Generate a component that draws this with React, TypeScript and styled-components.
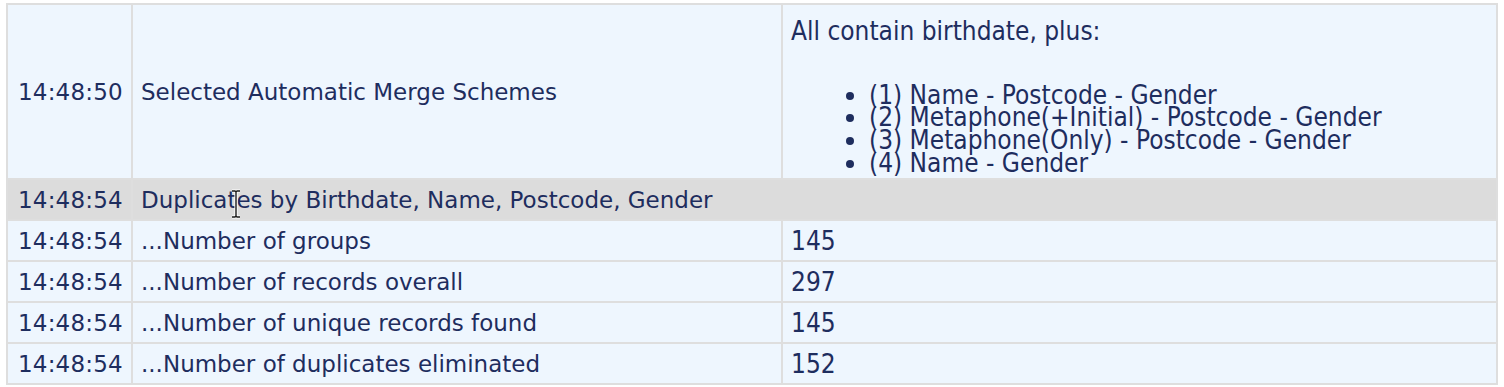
import { Fragment } from "react";
import styled, { createGlobalStyle } from "styled-components";

const GlobalStyle = createGlobalStyle`
  body {
    margin: 0;
    background: #ffffff;
  }
`;

const Page = styled.div`
  padding: 3px 6px 0;
`;

const LogGrid = styled.div`
  display: grid;
  grid-template-columns: 123px 648px 713px;
  grid-template-rows: 173px repeat(5, 39px);
  gap: 2px;
  padding: 2px;
  width: 1492px;
  box-sizing: border-box;
  background: #dedede;
  color: #1e2d5e;
`;

const Cell = styled.div<{ $section?: boolean }>`
  position: relative;
  display: flex;
  align-items: center;
  padding: 0 8px;
  background: ${(p) => (p.$section ? "#dcdcdc" : "#eef6fe")};
  font-family: "DejaVu Sans", Verdana, sans-serif;
  font-size: 23px;
  line-height: 26px;
  white-space: nowrap;
`;

const TimeCell = styled(Cell)`
  padding-left: 10px;
  letter-spacing: 0.2px;
`;

const MessageCell = styled(Cell)<{ $wide?: boolean }>`
  grid-column: ${(p) => (p.$wide ? "span 2" : "auto")};
`;

const ValueCell = styled(Cell)`
  font-family: "DejaVu Sans Condensed", "DejaVu Sans", Tahoma, sans-serif;
  font-stretch: condensed;
  font-size: 26px;
`;

const SchemeCell = styled(ValueCell)`
  flex-direction: column;
  align-items: flex-start;
  padding-top: 15px;
  line-height: 22.7px;
`;

const SchemeList = styled.ul`
  margin: 41px 0 0;
  padding-left: 78px;
  list-style: disc;
`;

const Cursor = styled.svg`
  position: absolute;
  left: 97px;
  top: 9px;
`;

const IBeam = () => (
  <Cursor width="12" height="30" viewBox="0 0 12 30">
    <path
      d="M2 2h3l1 1 1-1h3M6 3v24M2 28h3l1-1 1 1h3"
      fill="none"
      stroke="#ffffff"
      strokeWidth="3.2"
    />
    <path
      d="M2 2h3l1 1 1-1h3M6 3v24M2 28h3l1-1 1 1h3"
      fill="none"
      stroke="#1a1a1a"
      strokeWidth="1.4"
    />
  </Cursor>
);

const schemes = [
  "(1) Name - Postcode - Gender",
  "(2) Metaphone(+Initial) - Postcode - Gender",
  "(3) Metaphone(Only) - Postcode - Gender",
  "(4) Name - Gender",
];

const stats = [
  { label: "...Number of groups", value: "145" },
  { label: "...Number of records overall", value: "297" },
  { label: "...Number of unique records found", value: "145" },
  { label: "...Number of duplicates eliminated", value: "152" },
];

export default function App() {
  return (
    <>
      <GlobalStyle />
      <Page>
        <LogGrid>
          <TimeCell>14:48:50</TimeCell>
          <MessageCell>Selected Automatic Merge Schemes</MessageCell>
          <SchemeCell>
            All contain birthdate, plus:
            <SchemeList>
              {schemes.map((s) => (
                <li key={s}>{s}</li>
              ))}
            </SchemeList>
          </SchemeCell>

          <TimeCell $section>14:48:54</TimeCell>
          <MessageCell $section $wide>
            Duplicates by Birthdate, Name, Postcode, Gender
            <IBeam />
          </MessageCell>

          {stats.map((row) => (
            <Fragment key={row.label}>
              <TimeCell>14:48:54</TimeCell>
              <MessageCell>{row.label}</MessageCell>
              <ValueCell>{row.value}</ValueCell>
            </Fragment>
          ))}
        </LogGrid>
      </Page>
    </>
  );
}
